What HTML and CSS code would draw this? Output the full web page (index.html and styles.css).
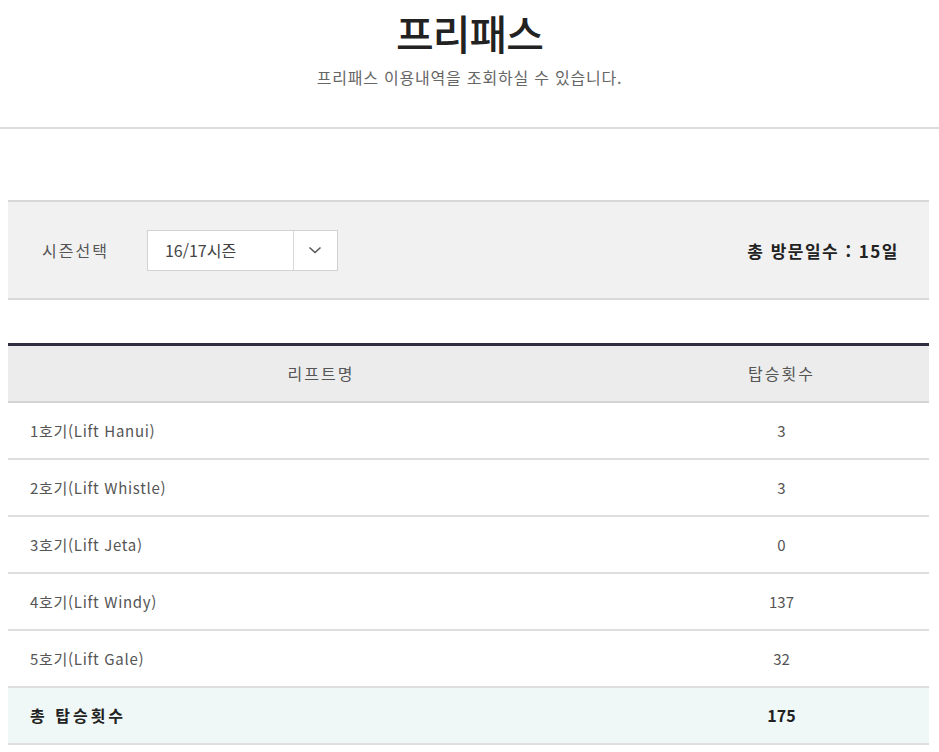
FILE: index.html
```html
<!DOCTYPE html>
<html lang="ko">
<head>
<meta charset="utf-8">
<title>프리패스</title>
<link rel="stylesheet" href="styles.css">
</head>
<body>
<header class="page-head">
  <h1 class="title">프리패스</h1>
  <p class="subtitle">프리패스 이용내역을 조회하실 수 있습니다.</p>
</header>
<main class="content">
  <section class="filter">
    <div class="filter-left">
      <span class="filter-label">시즌선택</span>
      <div class="select">
        <span class="select-value">16/17시즌</span>
        <span class="select-btn">
          <svg width="14" height="8" viewBox="0 0 14 8"><path d="M1.5 1.5 L7 6.5 L12.5 1.5" fill="none" stroke="#555" stroke-width="1.5"/></svg>
        </span>
      </div>
    </div>
    <div class="visit-total">총 방문일수 : 15일</div>
  </section>
  <table class="lift-table">
    <thead>
      <tr><th class="col-name">리프트명</th><th class="col-count">탑승횟수</th></tr>
    </thead>
    <tbody>
      <tr><td class="name">1호기(Lift Hanui)</td><td class="count">3</td></tr>
      <tr><td class="name">2호기(Lift Whistle)</td><td class="count">3</td></tr>
      <tr><td class="name">3호기(Lift Jeta)</td><td class="count">0</td></tr>
      <tr><td class="name">4호기(Lift Windy)</td><td class="count">137</td></tr>
      <tr><td class="name">5호기(Lift Gale)</td><td class="count">32</td></tr>
      <tr class="total"><td class="name">총 탑승횟수</td><td class="count">175</td></tr>
    </tbody>
  </table>
</main>
</body>
</html>
```
FILE: styles.css
```css
* { box-sizing: border-box; }
html, body { margin: 0; padding: 0; background: #fff; }
body {
  font-family: "Noto Sans CJK KR", "Noto Sans", sans-serif;
  color: #555;
}
.page-head {
  height: 129px;
  border-bottom: 2px solid #dcdcdc;
  text-align: center;
  padding-top: 4px;
}
.title {
  margin: 0;
  font-size: 41px;
  font-weight: 500;
  color: #222;
  line-height: 56px;
  letter-spacing: -1px;
}
.subtitle {
  margin: 6px 0 0;
  font-size: 16px;
  letter-spacing: 0.8px;
  color: #666;
  line-height: 22px;
}
.content {
  width: 921px;
  margin: 71px 0 0 8px;
}
.filter {
  height: 100px;
  background: #f1f1f1;
  border-top: 2px solid #d8d8d8;
  border-bottom: 2px solid #d8d8d8;
  display: flex;
  align-items: center;
  justify-content: space-between;
  padding: 0 30px 0 34px;
}
.filter-left {
  display: flex;
  align-items: center;
}
.filter-label {
  font-size: 16px;
  letter-spacing: 2px;
  color: #555;
  margin-right: 38px;
}
.select {
  display: flex;
  width: 191px;
  height: 41px;
  background: #fff;
  border: 1px solid #d2d2d2;
}
.select-value {
  flex: 1;
  display: flex;
  align-items: center;
  padding-left: 17px;
  font-size: 16px;
  color: #444;
  border-right: 1px solid #d8d8d8;
}
.select-btn {
  width: 43px;
  display: flex;
  align-items: center;
  justify-content: center;
}
.visit-total {
  font-size: 17px;
  font-weight: 700;
  letter-spacing: 1.5px;
  color: #222;
}
.lift-table {
  width: 100%;
  margin-top: 43px;
  border-collapse: collapse;
  border-top: 3px solid #2e2e3e;
}
.lift-table th {
  background: #ececec;
  height: 57px;
  font-size: 16px;
  font-weight: 400;
  letter-spacing: 2px;
  color: #555;
  border-bottom: 2px solid #d4d4d4;
}
.col-name { width: 626px; }
.lift-table td {
  height: 57px;
  font-size: 15px;
  color: #555;
  border-bottom: 2px solid #dedede;
}
.lift-table td.name { padding-left: 22px; letter-spacing: 0.7px; }
.lift-table td.count { text-align: center; }
.lift-table tr.total td {
  background: #eff8f7;
  font-weight: 700;
  color: #222;
  font-size: 16px;
}
.lift-table tr.total td.name { letter-spacing: 3px; }
```
